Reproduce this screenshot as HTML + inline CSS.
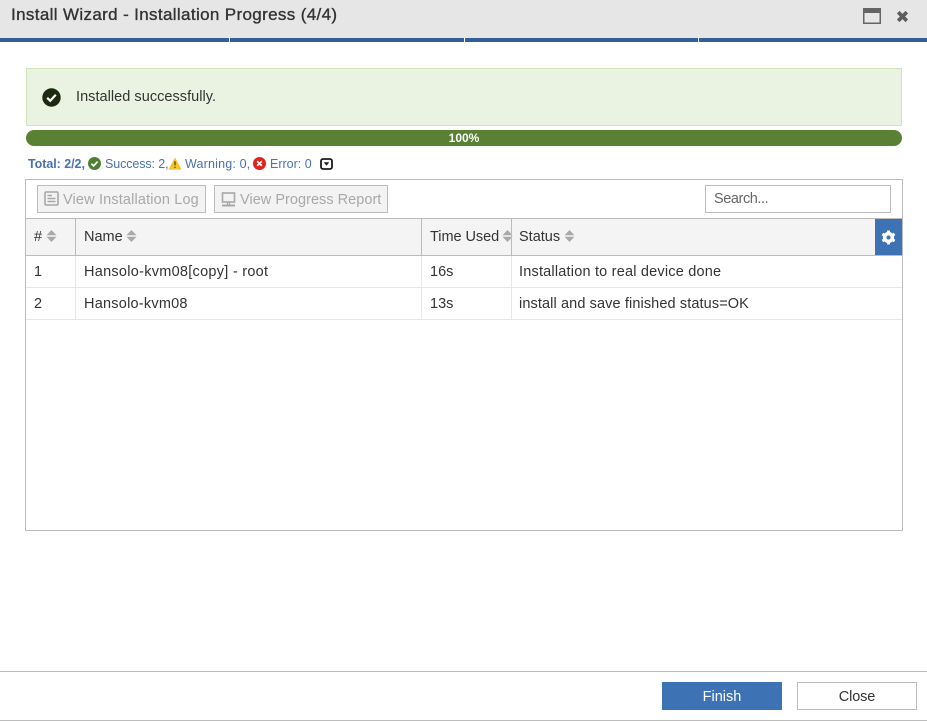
<!DOCTYPE html>
<html><head><meta charset="utf-8"><title>Install Wizard</title>
<style>
html,body{margin:0;padding:0;background:#fff}
#p{position:relative;width:927px;height:721px;overflow:hidden;background:#fff;font-family:"Liberation Sans",sans-serif;color:#333}
#p div,#p span,#p svg{position:absolute;box-sizing:border-box}
.t{white-space:nowrap;font-size:14.5px;line-height:18px}
.s{font-size:12.5px;color:#4a72ab;line-height:16px;white-space:nowrap}
.g{color:#a8a8a8;font-size:14.5px;line-height:18px;white-space:nowrap}
</style></head><body><div id="p">
<div style="left:0;top:0;width:927px;height:38px;background:#e6e6e6"></div>
<div style="left:0;top:38px;width:927px;height:4px;background:#335f96"></div>
<div style="left:229px;top:38px;width:1px;height:4px;background:#fff"></div>
<div style="left:464px;top:38px;width:1px;height:4px;background:#fff"></div>
<div style="left:698px;top:38px;width:1px;height:4px;background:#fff"></div>
<span class="t" style="left:11px;top:5px;font-size:17px;line-height:20px;color:#333;-webkit-text-stroke:.35px #333;letter-spacing:.355px">Install Wizard - Installation Progress (4/4)</span>
<svg style="left:863px;top:8px" width="18" height="16" viewBox="0 0 18 16"><rect x=".75" y=".75" width="16.5" height="14.5" fill="none" stroke="#646464" stroke-width="1.5"/><rect x="0" y="0" width="18" height="5" fill="#646464"/></svg>
<svg style="left:896px;top:10px" width="13" height="13" viewBox="0 0 13 13"><path d="M2.2 2.2L10.8 10.8M10.8 2.2L2.2 10.8" stroke="#5c5c5c" stroke-width="3.6" fill="none"/></svg>

<div style="left:26px;top:68px;width:876px;height:58px;background:#eaf3e1;border:1px solid #d1e5bb"></div>
<svg style="left:42px;top:88px" width="19" height="19" viewBox="0 0 19 19"><circle cx="9.5" cy="9.5" r="9.2" fill="#1d2a12"/><path d="M5.2 9.8L8.2 12.8L13.8 6.8" stroke="#fff" stroke-width="2.2" fill="none"/></svg>
<span class="t" style="left:76px;top:88px;color:#333;letter-spacing:.04px">Installed successfully.</span>

<div style="left:26px;top:130px;width:876px;height:16px;background:#5a8033;border-radius:8px"></div>
<span style="left:26px;top:130px;width:876px;text-align:center;color:#fff;font-size:12px;font-weight:bold;line-height:16px">100%</span>

<span class="s" style="left:28px;top:156px;font-weight:bold;letter-spacing:-.05px">Total: 2/2,</span>
<svg style="left:88px;top:157px" width="13" height="13" viewBox="0 0 13 13"><circle cx="6.5" cy="6.5" r="6.5" fill="#4f7f33"/><path d="M3.4 6.7L5.6 8.9L9.6 4.6" stroke="#fff" stroke-width="1.7" fill="none"/></svg>
<span class="s" style="left:105px;top:156px;letter-spacing:-.1px">Success: 2,</span>
<svg style="left:168px;top:157px" width="14" height="13" viewBox="0 0 14 13"><path d="M7 0.5L13.6 12.6H0.4Z" fill="#f7c325"/><path d="M7 4.2V8.4M7 9.6V11" stroke="#5a4a10" stroke-width="1.3"/></svg>
<span class="s" style="left:185px;top:156px;letter-spacing:.18px">Warning: 0,</span>
<svg style="left:253px;top:157px" width="13" height="13" viewBox="0 0 13 13"><circle cx="6.5" cy="6.5" r="6.5" fill="#e2231a"/><path d="M4.2 4.2L8.8 8.8M8.8 4.2L4.2 8.8" stroke="#fff" stroke-width="1.8"/></svg>
<span class="s" style="left:270px;top:156px">Error: 0</span>
<svg style="left:320px;top:158px" width="13" height="12" viewBox="0 0 13 12"><rect x="1" y="1" width="11" height="10" rx="2" fill="#fff" stroke="#1a1a1a" stroke-width="1.8"/><path d="M3.8 4.2H9.2L6.5 7.8Z" fill="#1a1a1a"/></svg>

<div style="left:25px;top:179px;width:878px;height:352px;border:1px solid #bbb"></div>

<div style="left:37px;top:185px;width:169px;height:28px;background:#f3f3f3;border:1px solid #bcbcbc"></div>
<svg style="left:44px;top:191px" width="15" height="15" viewBox="0 0 15 15"><rect x="1" y="1" width="13" height="13" rx="1" fill="none" stroke="#a8a8a8" stroke-width="1.6"/><path d="M3.5 4.5H8M3.5 7.5H11.5M3.5 10.5H11.5" stroke="#a8a8a8" stroke-width="1.4"/></svg>
<span class="g" style="left:63px;top:191px;letter-spacing:.15px">View Installation Log</span>
<div style="left:214px;top:185px;width:174px;height:28px;background:#f3f3f3;border:1px solid #bcbcbc"></div>
<svg style="left:221px;top:192px" width="15" height="15" viewBox="0 0 15 15"><rect x="1.5" y="1" width="12" height="9" fill="none" stroke="#a8a8a8" stroke-width="1.6"/><path d="M6.5 10.5V12.5M8.5 10.5V12.5" stroke="#a8a8a8" stroke-width="1.2"/><rect x="1" y="12.5" width="13" height="2" fill="#a8a8a8"/></svg>
<span class="g" style="left:240px;top:191px;letter-spacing:.03px">View Progress Report</span>

<div style="left:705px;top:185px;width:186px;height:28px;border:1px solid #bcbcbc;background:#fff"></div>
<span class="t" style="left:714px;top:190px;color:#666;letter-spacing:-.42px">Search...</span>

<div style="left:26px;top:218px;width:876px;height:38px;background:#f4f4f4;border-top:1px solid #bbb;border-bottom:1px solid #bbb"></div>
<div style="left:75px;top:219px;width:1px;height:36px;background:#bbb"></div>
<div style="left:421px;top:219px;width:1px;height:36px;background:#bbb"></div>
<div style="left:875px;top:219px;width:27px;height:36px;background:#3d72b4"></div>
<svg style="left:881px;top:230px" width="15" height="15" viewBox="0 0 15 15"><circle cx="7.5" cy="7.5" r="4" fill="none" stroke="#fff" stroke-width="3.2"/><path d="M7.5 .5V14.5M1.4 4L13.6 11M1.4 11L13.6 4" stroke="#fff" stroke-width="2.8"/><circle cx="7.5" cy="7.5" r="2" fill="#3d72b4"/></svg>

<span class="t" style="left:34px;top:228px">#</span>
<span class="t" style="left:84px;top:228px">Name</span>
<span class="t" style="left:430px;top:228px;letter-spacing:-.05px">Time Used</span>
<span class="t" style="left:519px;top:228px">Status</span>
<svg style="left:46px;top:230px" width="11" height="12" viewBox="0 0 11 12"><path d="M5.5 0L10.5 5.2H.5ZM.5 6.8H10.5L5.5 12Z" fill="#a9a9a9"/></svg>
<svg style="left:126px;top:230px" width="11" height="12" viewBox="0 0 11 12"><path d="M5.5 0L10.5 5.2H.5ZM.5 6.8H10.5L5.5 12Z" fill="#a9a9a9"/></svg>
<svg style="left:502px;top:230px" width="11" height="12" viewBox="0 0 11 12"><path d="M5.5 0L10.5 5.2H.5ZM.5 6.8H10.5L5.5 12Z" fill="#a9a9a9"/></svg>
<svg style="left:564px;top:230px" width="11" height="12" viewBox="0 0 11 12"><path d="M5.5 0L10.5 5.2H.5ZM.5 6.8H10.5L5.5 12Z" fill="#a9a9a9"/></svg>
<div style="left:511px;top:219px;width:1px;height:36px;background:#bbb"></div>

<div style="left:26px;top:287px;width:876px;height:1px;background:#e6e6e6"></div>
<div style="left:26px;top:319px;width:876px;height:1px;background:#e6e6e6"></div>
<div style="left:75px;top:256px;width:1px;height:64px;background:#e6e6e6"></div>
<div style="left:421px;top:256px;width:1px;height:64px;background:#e6e6e6"></div>
<div style="left:511px;top:256px;width:1px;height:64px;background:#e6e6e6"></div>

<span class="t" style="left:34px;top:263px">1</span>
<span class="t" style="left:84px;top:263px;letter-spacing:.27px">Hansolo-kvm08[copy] - root</span>
<span class="t" style="left:430px;top:263px">16s</span>
<span class="t" style="left:519px;top:263px;letter-spacing:.2px">Installation to real device done</span>
<span class="t" style="left:34px;top:295px">2</span>
<span class="t" style="left:84px;top:295px;letter-spacing:.23px">Hansolo-kvm08</span>
<span class="t" style="left:430px;top:295px">13s</span>
<span class="t" style="left:519px;top:295px;letter-spacing:.11px">install and save finished status=OK</span>

<div style="left:0;top:671px;width:927px;height:1px;background:#bcbcbc"></div>
<div style="left:0;top:720px;width:927px;height:1px;background:#bcbcbc"></div>
<div style="left:662px;top:682px;width:120px;height:28px;background:#3d72b4;color:#fff;text-align:center;font-size:14.5px;line-height:30px">Finish</div>
<div style="left:797px;top:682px;width:120px;height:28px;background:#fff;border:1px solid #bcbcbc;color:#333;text-align:center;font-size:14.5px;line-height:28px;letter-spacing:-.1px">Close</div>
</div></body></html>
